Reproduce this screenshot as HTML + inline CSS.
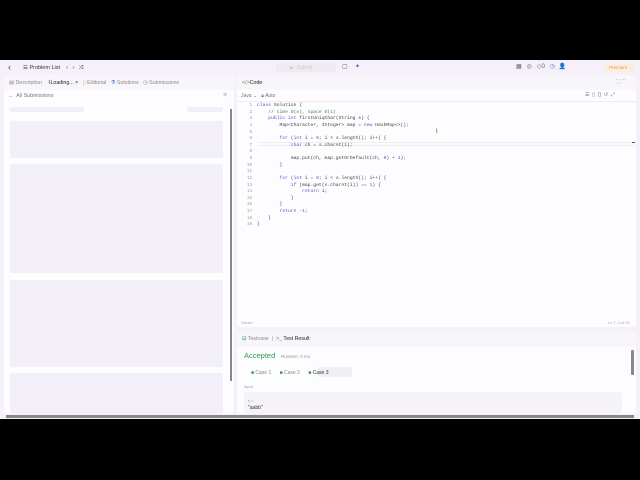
<!DOCTYPE html>
<html><head><meta charset="utf-8"><style>
*{margin:0;padding:0;box-sizing:border-box}
body{width:640px;height:480px;background:#000;position:relative;overflow:hidden;font-family:"Liberation Sans",sans-serif;color:#333}
.app{position:absolute;left:0;top:60px;width:640px;height:359px;background:#f5f0f9}
.abs{position:absolute}
.t{font-size:5px;white-space:nowrap;position:absolute}
.panel{position:absolute;background:#fdfcfe;border-radius:3px}
.sk{position:absolute;background:#f3eff8;border-radius:2px}
.code{position:absolute;left:237px;top:103px;font-family:"Liberation Mono",monospace;font-size:4.7px;line-height:6.62px;color:#444;white-space:pre}
.ln{position:absolute;left:240px;top:103px;width:12px;text-align:right;font-family:"Liberation Mono",monospace;font-size:4.2px;line-height:6.62px;color:#999;white-space:pre}
.k{color:#6a4fc9}
.c{color:#3a8a4a}
.n{color:#2f6fb5}
</style></head><body>
<div class="app">
 <!-- top bar -->
 <div class="t" style="left:8px;top:2px;font-size:9px;color:#444">&#x2039;</div>
 <div class="t" style="left:23px;top:5px;color:#333;font-size:5.5px">☰ Problem List &nbsp;&nbsp;&nbsp;‹ &nbsp;&nbsp;› &nbsp;&nbsp;⤮</div>
 <div class="abs" style="left:276px;top:3px;width:60px;height:9px;background:#efebf3;border-radius:2px"></div>
 <div class="t" style="left:290px;top:5px;color:#ccc">▶ &nbsp;Submit</div>
 <div class="t" style="left:342px;top:3px;color:#555;font-size:6px">▢</div>
 <div class="t" style="left:355px;top:3px;color:#6a4fc9;font-size:6px">✦</div>
 <div class="t" style="left:516px;top:3px;color:#666;font-size:6px">▦ &nbsp;&nbsp;◎ &nbsp;&nbsp;◇0 &nbsp;&nbsp;<span style="color:#3b7fd4">◷</span> &nbsp;👤</div>
 <div class="abs" style="left:604px;top:3px;width:30px;height:9px;background:#fbeee0;border-radius:2px"></div>
 <div class="t" style="left:609px;top:5px;color:#e39b3b;font-size:4.5px">Premium</div>

 <!-- left panel -->
 <div class="panel" style="left:4px;top:15px;width:230px;height:339px"></div>
 <div class="abs" style="left:4px;top:15px;width:230px;height:15px;background:#f9f6fb;border-radius:3px 3px 0 0"></div>
 <div class="t" style="left:9px;top:20px;color:#888;font-size:5.3px">▤ Description &nbsp;&nbsp;&nbsp;<span style="color:#222">⌇Loading... ×</span> &nbsp;&nbsp;<span style="color:#e3b341">▯</span> Editorial &nbsp;&nbsp;<span style="color:#3b7fd4">⚗</span> Solutions &nbsp;&nbsp;◷ Submissions</div>
 <div class="t" style="left:8px;top:33px;color:#777;font-size:5.3px">← &nbsp;All Submissions</div>
 <div class="t" style="left:223px;top:32px;color:#999">⊘</div>
 <div class="sk" style="left:10px;top:47px;width:74px;height:5px"></div>
 <div class="sk" style="left:187px;top:47px;width:36px;height:5px"></div>
 <div class="sk" style="left:10px;top:61px;width:213px;height:37px"></div>
 <div class="sk" style="left:10px;top:104px;width:213px;height:109px"></div>
 <div class="sk" style="left:10px;top:220px;width:213px;height:87px"></div>
 <div class="sk" style="left:10px;top:313px;width:213px;height:41px"></div>
 <div class="abs" style="left:230px;top:49px;width:2px;height:272px;background:#888"></div>

 <!-- right panel -->
 <div class="panel" style="left:237px;top:15px;width:399px;height:252px"></div>
 <div class="abs" style="left:237px;top:15px;width:399px;height:15px;background:#f9f6fb;border-radius:3px 3px 0 0"></div>
 <div class="t" style="left:242px;top:20px;color:#222;font-size:5.3px"><span style="color:#3a9a4a">&lt;/&gt;</span>Code</div>
 <div class="t" style="left:616px;top:19px;color:#999">⛶ &nbsp;⌃</div>
 <div class="t" style="left:241px;top:33px;color:#777">Java ⌄ &nbsp;&nbsp;🔒︎ Auto</div>
 <div class="t" style="left:585px;top:32px;color:#777">☰ &nbsp;▯ &nbsp;{} &nbsp;↺ &nbsp;⤢</div>
 <div class="abs" style="left:237px;top:41px;width:399px;height:1px;background:#efebf3"></div>
 <div class="abs" style="left:258px;top:82px;width:378px;height:4px;border-top:1px solid #eee;border-bottom:1px solid #eee"></div>
 <div class="abs" style="left:632px;top:82px;width:3px;height:1px;background:#555"></div>
 <div class="t" style="left:241px;top:260px;color:#aaa;font-size:4px">Saved</div>
 <div class="t" style="left:608px;top:260px;color:#aaa;font-size:4px">Ln 7, Col 33</div>

 <!-- bottom panel -->
 <div class="panel" style="left:237px;top:271px;width:399px;height:83px"></div>
 <div class="abs" style="left:237px;top:271px;width:399px;height:16px;background:#f9f6fb;border-radius:3px 3px 0 0"></div>
 <div class="t" style="left:242px;top:276px;color:#888;font-size:5.3px"><span style="color:#3a9a4a">⊟</span> Testcase &nbsp;| &nbsp;<span style="color:#222"><span style="color:#3a9a4a">&gt;_</span> Test Result</span></div>
 <div class="t" style="left:244px;top:291px;color:#2e9a4a;font-size:7.5px">Accepted</div>
 <div class="t" style="left:281px;top:294px;color:#999;font-size:4.5px">Runtime: 0 ms</div>
 <div class="abs" style="left:318px;top:307px;width:34px;height:10px;background:#f1eef4;border-radius:2px"></div>
 <div class="t" style="left:251px;top:310px;color:#888"><span style="color:#2e9a4a">■</span> Case 1 &nbsp;&nbsp;&nbsp;&nbsp;&nbsp;<span style="color:#2e9a4a">■</span> Case 2 &nbsp;&nbsp;&nbsp;&nbsp;&nbsp;<span style="color:#2e9a4a">■</span> <span style="color:#333">Case 3</span></div>
 <div class="t" style="left:244px;top:324px;color:#999;font-size:4px">Input</div>
 <div class="abs" style="left:244px;top:332px;width:378px;height:22px;background:#f6f3f8;border-radius:3px"></div>
 <div class="t" style="left:248px;top:338px;color:#999;font-size:4px">s =</div>
 <div class="t" style="left:248px;top:345px;color:#333;font-size:5px">"aabb"</div>
 <div class="abs" style="left:631px;top:290px;width:3px;height:25px;background:#888;border-radius:1px"></div>

 <div class="abs" style="left:6px;top:355px;width:628px;height:3px;background:#888"></div>
</div>
<div class="ln">1
2
3
4
5
6
7
8
9
10
11
12
13
14
15
16
17
18
19</div>
<div class="code" style="left:257px"><span class="k">class</span> Solution {
    <span class="c">// time O(n), space O(1)</span>
    <span class="k">public int</span> firstUniqChar(String s) {
        Map&lt;Character, Integer&gt; map = <span class="k">new</span> HashMap&lt;&gt;();

        <span class="k">for</span> (<span class="k">int</span> i = <span class="n">0</span>; i &lt; s.length(); i++) {
            <span class="k">char</span> ch = s.charAt(i);

            map.put(ch, map.getOrDefault(ch, <span class="n">0</span>) + <span class="n">1</span>);
        }

        <span class="k">for</span> (<span class="k">int</span> i = <span class="n">0</span>; i &lt; s.length(); i++) {
            <span class="k">if</span> (map.get(s.charAt(i)) == <span class="n">1</span>) {
                <span class="k">return</span> i;
            }
        }
        <span class="k">return</span> -<span class="n">1</span>;
    }
}</div>
<div class="t" style="left:436px;top:129px;color:#444;font-size:6px">I</div>
</body></html>
